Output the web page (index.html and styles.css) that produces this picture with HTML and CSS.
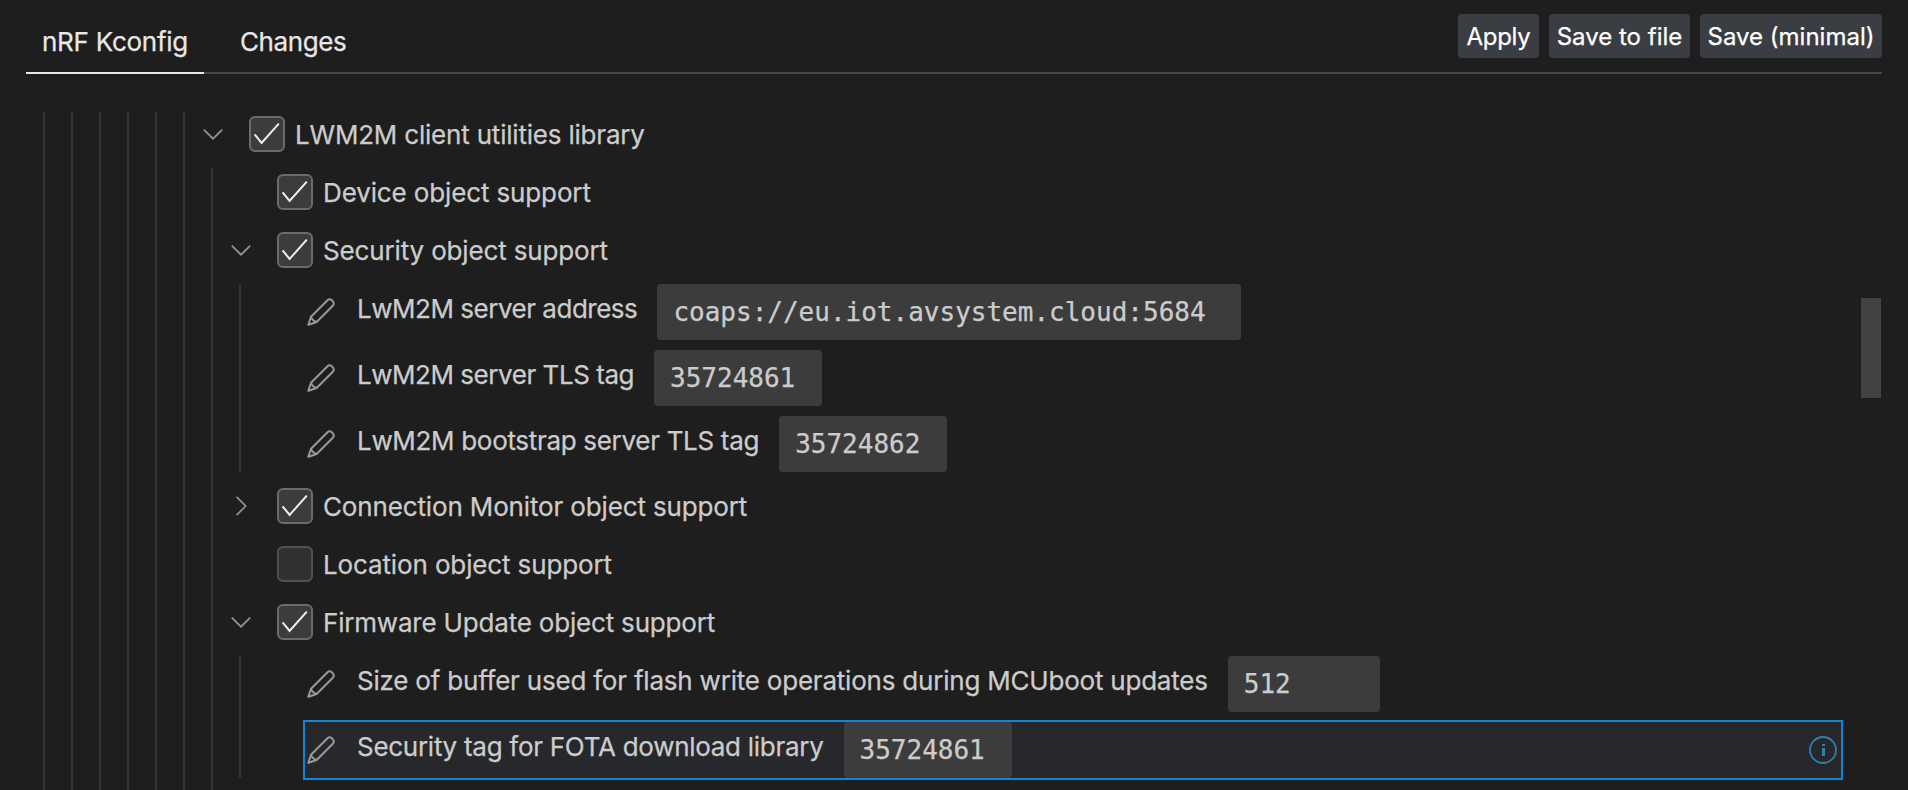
FILE: index.html
```html
<!DOCTYPE html>
<html lang="en">
<head>
<meta charset="utf-8">
<title>nRF Kconfig</title>
<link rel="stylesheet" href="styles.css">
</head>
<body>
<svg class="sprite" aria-hidden="true">
  <symbol id="down" viewBox="0 0 32 32"><path d="M6.800 11.600 16 20.700l9.200-9.100" fill="none" stroke="currentColor" stroke-width="1.700"/></symbol>
  <symbol id="right" viewBox="0 0 32 32"><path d="M11.600 6.800 20.700 16l-9.100 9.200" fill="none" stroke="currentColor" stroke-width="1.700"/></symbol>
  <symbol id="check" viewBox="0 0 36 36"><path d="M5.600 18.300 12.600 27 29.800 7.600" fill="none" stroke="currentColor" stroke-width="2"/></symbol>
  <symbol id="pen" viewBox="0 0 28 28"><path d="M1.300 26.700 4 18.800 20.500 2.200Q22.600.4 24.800 2.300L25.900 3.400Q27.700 5.600 25.800 7.800L9.600 24 1.600 26.800ZM4 18.800Q5 22.500 9.600 24" fill="none" stroke="currentColor" stroke-width="2" stroke-linejoin="round"/></symbol>
</svg>
<header class="bar">
  <nav class="tabs">
    <a class="tab active ls-kconfig">nRF Kconfig</a>
    <a class="tab ls-changes">Changes</a>
  </nav>
  <div class="actions">
    <button class="btn apply">Apply</button>
    <button class="btn file">Save to file</button>
    <button class="btn minimal">Save (minimal)</button>
  </div>
</header>
<main class="view">
  <div class="guides"><i></i><i></i><i></i><i></i><i></i><i></i></div>
  <div class="branch">
    <div class="row root">
      <svg class="chev"><use href="#down"/></svg>
      <span class="box"><svg><use href="#check"/></svg></span>
      <span class="label ls-client">LWM2M client utilities library</span>
    </div>
    <div class="group">
      <div class="row">
        <span class="chev"></span>
        <span class="box"><svg><use href="#check"/></svg></span>
        <span class="label ls-device">Device object support</span>
      </div>
      <div class="row">
        <svg class="chev"><use href="#down"/></svg>
        <span class="box"><svg><use href="#check"/></svg></span>
        <span class="label ls-security">Security object support</span>
      </div>
      <div class="fields">
        <div class="field">
          <svg class="pen"><use href="#pen"/></svg>
          <span class="name ls-address">LwM2M server address</span>
          <span class="value wide">coaps://eu.iot.avsystem.cloud:5684</span>
        </div>
        <div class="field">
          <svg class="pen"><use href="#pen"/></svg>
          <span class="name ls-tls">LwM2M server TLS tag</span>
          <span class="value">35724861</span>
        </div>
        <div class="field">
          <svg class="pen"><use href="#pen"/></svg>
          <span class="name ls-bootstrap">LwM2M bootstrap server TLS tag</span>
          <span class="value">35724862</span>
        </div>
      </div>
      <div class="row">
        <svg class="chev"><use href="#right"/></svg>
        <span class="box"><svg><use href="#check"/></svg></span>
        <span class="label ls-connection">Connection Monitor object support</span>
      </div>
      <div class="row">
        <span class="chev"></span>
        <span class="box off"></span>
        <span class="label ls-location">Location object support</span>
      </div>
      <div class="row">
        <svg class="chev"><use href="#down"/></svg>
        <span class="box"><svg><use href="#check"/></svg></span>
        <span class="label ls-firmware">Firmware Update object support</span>
      </div>
      <div class="fields">
        <div class="field">
          <svg class="pen"><use href="#pen"/></svg>
          <span class="name ls-size">Size of buffer used for flash write operations during MCUboot updates</span>
          <span class="value short">512</span>
        </div>
        <div class="field focused">
          <svg class="pen"><use href="#pen"/></svg>
          <span class="name ls-fota">Security tag for FOTA download library</span>
          <span class="value">35724861</span>
          <svg class="info" viewBox="0 0 28 28"><circle cx="14" cy="14" r="13" fill="none" stroke="currentColor" stroke-width="1.800"/><path d="M13 8h3v2h-3zM13 12h3v8h-3z" fill="currentColor"/></svg>
        </div>
      </div>
    </div>
  </div>
  <div class="scroll"><div class="thumb"></div></div>
</main>
</body>
</html>
```
FILE: styles.css
```css
* { box-sizing: border-box; }
body {
  margin: 0;
  height: 790px;
  overflow: hidden;
  background: #1e1e1e;
  color: #cccccc;
  font: 26px/32px Inter, "Liberation Sans", sans-serif;
  -webkit-text-stroke: 0.250px currentColor;
  display: flex;
  flex-direction: column;
}
.sprite { display: none; }
.bar {
  flex: none;
  height: 74px;
  margin: 0 26px;
  border-bottom: 2px solid #464646;
  display: flex;
  justify-content: space-between;
}
.tabs { display: flex; height: 74px; }
.tab {
  width: 178px;
  margin-right: 20px;
  padding: 26px 0 0 16px;
  color: #e7e7e7;
  white-space: nowrap;
}
.tab.active { border-bottom: 2px solid #e7e7e7; }
.actions { display: flex; gap: 10px; padding-top: 14px; }
.btn {
  height: 44px;
  padding: 2px 0 0;
  border: 0;
  border-radius: 4px;
  background: #3a3d41;
  color: #ffffff;
  font: 24px/42px Inter, "Liberation Sans", sans-serif;
  white-space: nowrap;
}
.apply { width: 81px; letter-spacing: -0.300px; }
.file { width: 141px; }
.minimal { width: 182px; }
.view { flex: 1; min-height: 0; display: flex; padding: 31px 27px 0 43px; }
.guides { flex: none; display: flex; padding-top: 7px; }
.guides i { width: 28px; border-left: 2px solid #343434; }
.branch { flex: 1; min-width: 0; }
.row { height: 58px; display: flex; align-items: center; white-space: nowrap; }
.chev { flex: none; width: 32px; height: 32px; margin: 0 20px 0 -14px; color: #949494; }
.box {
  flex: none;
  width: 36px;
  height: 36px;
  border: 2px solid #6b6b6b;
  border-radius: 6px;
  background: #3c3c3c;
  color: #f0f0f0;
}
.box svg { display: block; width: 36px; height: 36px; margin: -2px; }
.box.off { background: #313131; border-color: #505050; }
.label { margin-left: 10px; padding-top: 2px; }
.group {
  padding: 0 0 20px 28px;
  background: linear-gradient(#343434, #343434) 0 5px / 2px 100% no-repeat;
}
.fields {
  display: flex;
  flex-direction: column;
  gap: 6px;
  padding: 3px 18px 3px 64px;
  background: linear-gradient(#343434, #343434) 0 5px / 2px calc(100% - 10px) no-repeat;
}
.field { height: 60px; display: flex; align-items: center; white-space: nowrap; }
.pen { flex: none; width: 28px; height: 28px; margin-left: 4px; color: #999999; }
.name { margin-left: 22px; padding-bottom: 7px; }
.value {
  width: 168px;
  height: 56px;
  margin-left: 20px;
  padding-left: 16px;
  border-radius: 4px;
  background: #3c3c3c;
  font: 26px/56px "DejaVu Sans Mono", monospace;
}
.wide { width: 584px; }
.short { width: 152px; }
.focused { background: #26282b; outline: 2px solid #1484d6; outline-offset: -2px; }
.info { width: 28px; height: 28px; margin: 0 6px 0 auto; color: #327fa8; }
.scroll { flex: none; width: 20px; }
.thumb { height: 100px; margin-top: 193px; background: #424242; }

/* Tracking per label */
.ls-kconfig { letter-spacing: -0.260px; }
.ls-changes { letter-spacing: -0.400px; }
.ls-client { letter-spacing: -0.200px; }
.ls-device { letter-spacing: -0.130px; }
.ls-security { letter-spacing: -0.150px; }
.ls-address { letter-spacing: -0.480px; }
.ls-tls { letter-spacing: -0.460px; }
.ls-bootstrap { letter-spacing: -0.310px; }
.ls-connection { letter-spacing: -0.145px; }
.ls-location { letter-spacing: -0.130px; }
.ls-firmware { letter-spacing: -0.190px; }
.ls-size { letter-spacing: -0.212px; }
.ls-fota { letter-spacing: -0.280px; }
```
